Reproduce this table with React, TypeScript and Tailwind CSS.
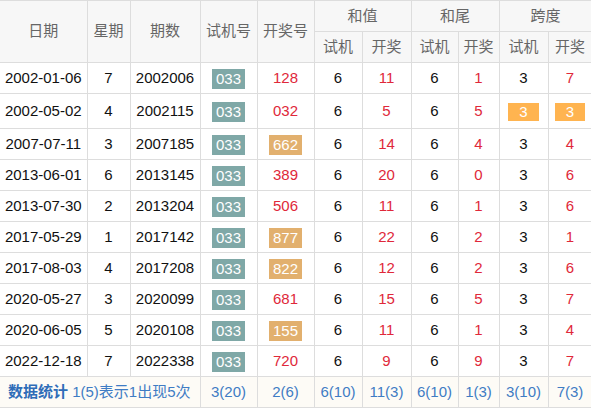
const rows = [
  { date: "2002-01-06", week: "7", issue: "2002006", open: "128", hot: false, hz: "11", hw: "1", kd: "7", big: false },
  { date: "2002-05-02", week: "4", issue: "2002115", open: "032", hot: false, hz: "5", hw: "5", kd: "3", big: true },
  { date: "2007-07-11", week: "3", issue: "2007185", open: "662", hot: true, hz: "14", hw: "4", kd: "4", big: false },
  { date: "2013-06-01", week: "6", issue: "2013145", open: "389", hot: false, hz: "20", hw: "0", kd: "6", big: false },
  { date: "2013-07-30", week: "2", issue: "2013204", open: "506", hot: false, hz: "11", hw: "1", kd: "6", big: false },
  { date: "2017-05-29", week: "1", issue: "2017142", open: "877", hot: true, hz: "22", hw: "2", kd: "1", big: false },
  { date: "2017-08-03", week: "4", issue: "2017208", open: "822", hot: true, hz: "12", hw: "2", kd: "6", big: false },
  { date: "2020-05-27", week: "3", issue: "2020099", open: "681", hot: false, hz: "15", hw: "5", kd: "7", big: false },
  { date: "2020-06-05", week: "5", issue: "2020108", open: "155", hot: true, hz: "11", hw: "1", kd: "4", big: false },
  { date: "2022-12-18", week: "7", issue: "2022338", open: "720", hot: false, hz: "9", hw: "9", kd: "7", big: false },
];

const stats = ["3(20)", "2(6)", "6(10)", "11(3)", "6(10)", "1(3)", "3(10)", "7(3)"];

const th = "border border-[#dddddd] bg-[#f7f7f7] font-normal text-[#666666] p-0";
const td = "border border-[#dddddd] p-0 text-center";

export default function App() {
  return (
    <div className="w-[591px] h-[409px] overflow-hidden bg-white font-['Liberation_Sans','Noto_Sans_CJK_SC',sans-serif] text-[15px]">
      <table className="table-fixed border-collapse w-[592px]">
        <colgroup>
          <col className="w-[87px]" />
          <col className="w-[43px]" />
          <col className="w-[70px]" />
          <col className="w-[57px]" />
          <col className="w-[57px]" />
          <col className="w-[48px]" />
          <col className="w-[49px]" />
          <col className="w-[47px]" />
          <col className="w-[41px]" />
          <col className="w-[49px]" />
          <col className="w-[44px]" />
        </colgroup>
        <thead>
          <tr className="h-[31px]">
            <th rowSpan={2} className={`${th} border-l-0`}>日期</th>
            <th rowSpan={2} className={th}>星期</th>
            <th rowSpan={2} className={th}>期数</th>
            <th rowSpan={2} className={th}>试机号</th>
            <th rowSpan={2} className={th}>开奖号</th>
            <th colSpan={2} className={th}>和值</th>
            <th colSpan={2} className={th}>和尾</th>
            <th colSpan={2} className={th}>跨度</th>
          </tr>
          <tr className="h-[31px]">
            <th className={th}>试机</th>
            <th className={th}>开奖</th>
            <th className={th}>试机</th>
            <th className={th}>开奖</th>
            <th className={th}>试机</th>
            <th className={th}>开奖</th>
          </tr>
        </thead>
        <tbody className="text-[#111111]">
          {rows.map((r) => (
            <tr key={r.issue} className={r.big ? "h-[35px]" : "h-[31px]"}>
              <td className={`${td} border-l-0`}>{r.date}</td>
              <td className={td}>{r.week}</td>
              <td className={td}>{r.issue}</td>
              <td className={td}>
                <span className="inline-block bg-[#7fa8a7] px-[4px] leading-[20px] text-white align-middle">033</span>
              </td>
              <td className={td}>
                {r.hot ? (
                  <span className="inline-block bg-[#e2b06e] px-[4px] leading-[20px] text-white align-middle">{r.open}</span>
                ) : (
                  <span className="text-[#e0283a]">{r.open}</span>
                )}
              </td>
              <td className={td}>6</td>
              <td className={`${td} text-[#e0283a]`}>{r.hz}</td>
              <td className={td}>6</td>
              <td className={`${td} text-[#e0283a]`}>{r.hw}</td>
              <td className={td}>
                {r.big ? (
                  <span className="inline-block bg-[#ffb450] px-[11px] leading-[18px] text-white align-middle">3</span>
                ) : (
                  "3"
                )}
              </td>
              <td className={`${td} text-[#e0283a]`}>
                {r.big ? (
                  <span className="inline-block bg-[#ffb450] px-[11px] leading-[18px] text-white align-middle">{r.kd}</span>
                ) : (
                  r.kd
                )}
              </td>
            </tr>
          ))}
          <tr className="h-[31px] bg-[#fdfbf6] text-[#3f7cc4]">
            <td colSpan={3} className="border border-[#dddddd] border-l-0 p-0 pl-[8px] text-left whitespace-nowrap">
              <span className="font-bold text-[#2f6db8]">数据统计</span> 1(5)表示1出现5次
            </td>
            {stats.map((s, i) => (
              <td key={i} className={td}>{s}</td>
            ))}
          </tr>
        </tbody>
      </table>
    </div>
  );
}
